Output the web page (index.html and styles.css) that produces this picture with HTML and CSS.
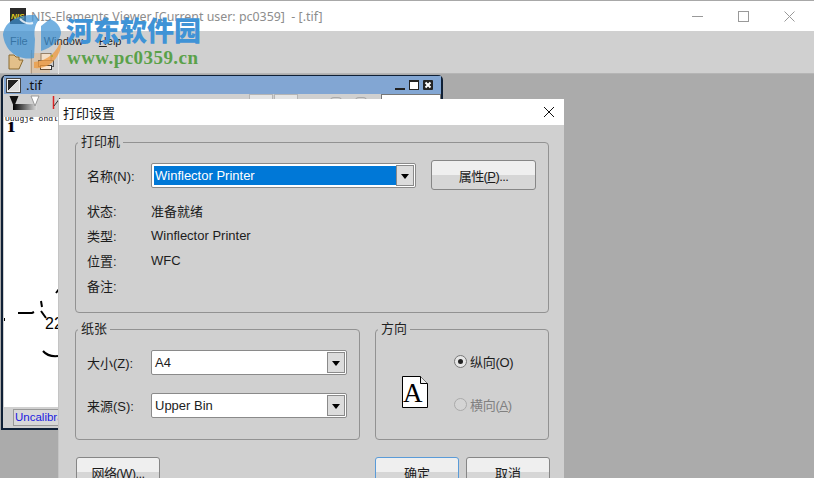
FILE: index.html
```
<!DOCTYPE html>
<html lang="zh">
<head>
<meta charset="utf-8">
<title>NIS-Elements Viewer</title>
<link rel="stylesheet" href="styles.css">
</head>
<body>
<div class="app">
  <header class="titlebar">
    <svg class="app-icon" width="16" height="16" viewBox="0 0 16 16"><rect width="16" height="16" fill="#2a2a2a"/><text x="1" y="11" class="nis">NIS</text></svg>
    <span class="app-title">NIS-Elements Viewer [Current user: pc0359]  - [.tif]</span>
    <div class="win-controls">
      <svg width="11" height="11" viewBox="0 0 11 11"><path d="M0 5.500h11" stroke="#999" fill="none"/></svg>
      <svg width="11" height="11" viewBox="0 0 11 11"><rect x=".5" y=".5" width="10" height="10" stroke="#999" fill="none"/></svg>
      <svg width="11" height="11" viewBox="0 0 11 11"><path d="M.5.5l10 10M10.500.5l-10 10" stroke="#999" fill="none"/></svg>
    </div>
  </header>
  <nav class="menubar"><span>File</span><span>Window</span><span><u>H</u>elp</span></nav>
  <div class="toolbar">
    <svg width="16" height="18" viewBox="0 0 16 18"><path d="M1 2h5l2 2h3v3h4l-4 9H1z" fill="#e3c08a" stroke="#8a6a30"/></svg>
    <div class="tool-print">
      <svg width="20" height="20" viewBox="0 0 20 20"><rect x="5" y="1.500" width="10" height="7" fill="#f4f4f4" stroke="#777"/><rect x="2.500" y="8.500" width="15" height="6" fill="#ccc" stroke="#555"/><rect x="4.500" y="13.500" width="11" height="4" fill="#fff" stroke="#333"/><rect x="15" y="3" width="2" height="2" fill="#2c2"/></svg>
    </div>
  </div>
  <main class="workspace">
    <section class="child">
      <div class="child-title">
        <span class="child-icon"></span>
        <span class="child-name">.tif</span>
        <div class="child-btns">
          <svg width="10" height="10" viewBox="0 0 10 10"><rect x="0" y="8" width="10" height="2" fill="#222"/></svg>
          <svg width="10" height="10" viewBox="0 0 10 10"><rect x=".5" y=".5" width="9" height="9" fill="#fff" stroke="#222"/><rect width="10" height="2" fill="#222"/></svg>
          <svg width="10" height="10" viewBox="0 0 10 10"><rect width="10" height="10" rx="1" fill="#222"/><path d="M2.500 2.500l5 5M7.500 2.500l-5 5" stroke="#fff" stroke-width="2"/></svg>
        </div>
      </div>
      <div class="child-tools">
        <svg width="36" height="20" viewBox="0 0 36 20"><defs><linearGradient id="g"><stop offset="0" stop-color="#000"/><stop offset="1" stop-color="#ddd"/></linearGradient></defs><rect x="5" y="9" width="24" height="6" fill="url(#g)"/><path d="M1.500 1h9l-4.500 11z" fill="#111"/><path d="M23 1h8l-4 10z" fill="#fff" stroke="#999"/></svg>
        <svg class="red-tool" width="10" height="20" viewBox="0 0 10 20"><path d="M1.500 1v13" stroke="#d22" stroke-width="1.500"/><path d="M2 11l6-8" stroke="#333"/></svg>
        <span class="pat first"></span><span class="pat"></span>
        <span class="dot first"></span><span class="dot"></span>
        <span class="mini-field"></span>
      </div>
      <div class="canvas">
        <span class="cap">Uuugje ondl eneie</span>
        <span class="one">1</span>
        <svg class="blobs" width="58" height="80" viewBox="0 0 58 80"><path d="M14 30h14l2-1M37 18l1 6M37 28l5 7M52 10l3-4M0 35v3M39 68q5 6 15 5" stroke="#000" stroke-width="2" fill="none"/></svg>
        <span class="two">22</span>
      </div>
      <div class="child-status"><span>Uncalibrated</span></div>
    </section>

    <section class="dialog">
      <div class="dlg-title">
        <span>打印设置</span>
        <svg width="12" height="12" viewBox="0 0 12 12"><path d="M1 1l10 10M11 1L1 11" stroke="#111" fill="none"/></svg>
      </div>
      <div class="dlg-body">
        <fieldset class="group printer">
          <legend>打印机</legend>
          <div class="name-row">
            <span class="lbl">名称(N):</span>
            <div class="combo selected"><span class="combo-val">Winflector Printer</span><span class="arrow"></span></div>
            <button class="btn prop tight">属性(<u>P</u>)...</button>
          </div>
          <div class="info"><span class="lbl">状态:</span><span>准备就绪</span></div>
          <div class="info"><span class="lbl">类型:</span><span>Winflector Printer</span></div>
          <div class="info"><span class="lbl">位置:</span><span>WFC</span></div>
          <div class="info"><span class="lbl">备注:</span><span></span></div>
        </fieldset>
        <div class="lower">
          <fieldset class="group paper">
            <legend>纸张</legend>
            <div class="paper-row"><span class="lbl">大小(Z):</span><div class="combo"><span class="combo-val">A4</span><span class="arrow"></span></div></div>
            <div class="paper-row"><span class="lbl">来源(S):</span><div class="combo"><span class="combo-val">Upper Bin</span><span class="arrow"></span></div></div>
          </fieldset>
          <fieldset class="group orient">
            <legend>方向</legend>
            <div class="orient-inner">
              <svg class="page" width="26" height="32" viewBox="0 0 26 32"><path d="M.5.5h18l7 7v24H.5z" fill="#fff" stroke="#000"/><path d="M18.500.5v7h7" fill="#eee" stroke="#000"/></svg>
              <span class="page-a">A</span>
              <div class="radios">
                <div class="radio on"><i></i><span>纵向(O)</span></div>
                <div class="radio off"><i></i><span>横向(<u>A</u>)</span></div>
              </div>
            </div>
          </fieldset>
        </div>
        <div class="actions">
          <button class="btn wide tight">网络(<u>W</u>)...</button>
          <span class="grow"></span>
          <button class="btn wide primary">确定</button>
          <button class="btn wide">取消</button>
        </div>
      </div>
    </section>
  </main>
  <div class="wm">
    <svg class="wm-logo" width="70" height="70" viewBox="0 0 70 70">
      <rect x="30" y="48" width="20" height="20" fill="#ef9a3e" opacity=".25"/>
      <path d="M34 57C48 56 58 46 61 34c2 14-9 31-27 29z" fill="#ef9a3e" opacity=".75"/>
      <path d="M3 30C4 18 16 9 35 10l4 5c-5 5-5 13-4 19l-1 19C18 56 5 46 3 30z" fill="#3f93d6" opacity=".72"/>
      <path d="M41 21l9-7c6 2 11 8 11 14 0 6-9 15-20 18z" fill="#3f93d6" opacity=".72"/>
      <path d="M20 14q6 6 13 4" fill="none" stroke="#fff" stroke-width="2" opacity=".8"/>
    </svg>
    <span class="wm-cn">河东软件园</span>
    <span class="wm-url">www.pc0359.cn</span>
  </div>
</div>
</body>
</html>
```
FILE: styles.css
```
* { box-sizing: border-box; }
html, body { margin: 0; padding: 0; height: 100%; overflow: hidden; }
body { font: 13px "Liberation Sans", "Noto Sans CJK SC", sans-serif; color: #1c1c1c; background: #ababab; }
.app { position: relative; width: 814px; height: 478px; overflow: hidden; display: flex; flex-direction: column; border-top: 1px solid #a8a8a8; }
.titlebar { height: 30px; background: #fff; display: flex; align-items: center; padding: 0 0 0 10px; gap: 5px; flex: none; }
.app-icon { flex: none; }
.nis { font: italic bold 8px "Liberation Sans", sans-serif; fill: #e6d020; }
.app-title { font: 12.400px "Noto Sans", sans-serif; color: #8d8d8d; white-space: pre; }
.win-controls { margin-left: auto; display: flex; gap: 35px; padding-right: 19px; }
.menubar { height: 19px; background: #d0d0d0; display: flex; align-items: center; gap: 16px; padding: 0 0 0 10px; font: 11px "Liberation Sans", sans-serif; flex: none; }
.menubar span { color: #222; }
.toolbar { height: 24px; background: #d0d0d0; display: flex; align-items: center; gap: 8px; padding: 0 0 0 8px; flex: none; border-bottom: 1px solid #b5b5b5; }
.tool-print { width: 28px; height: 24px; margin-left: -1px; padding-left: 2px; display: flex; align-items: center; justify-content: center; border-left: 1px solid #999; border-right: 1px solid #e4e4e4; }
.workspace { position: relative; flex: 1; background: #ababab; }

.child { position: absolute; left: 1px; top: 1px; width: 442px; height: 355px; background: #d0d0d0; border: 2px solid #0f2036; border-top-width: 1px; border-top-left-radius: 5px; border-top-right-radius: 5px; display: flex; flex-direction: column; padding: 0 0 0 1px; }
.child-title { height: 18px; background: #82a6d3; display: flex; align-items: center; gap: 3px; padding: 0 2px 0 2px; flex: none; }
.child-icon { width: 15px; height: 15px; border: 2px solid #eee; outline: 1px solid #444; outline-offset: -1px; background: linear-gradient(135deg, #222 50%, #ddd 50%); }
.child-name { font: 13px "Noto Sans", sans-serif; color: #111; margin-left: 2px; }
.child-btns { margin-left: auto; display: flex; gap: 4px; padding-right: 6px; }
.child-tools { height: 23px; display: flex; align-items: flex-start; padding: 1px 0 0 4px; flex: none; overflow: hidden; }
.red-tool { margin-left: 8px; flex: none; }
.pat { width: 24px; height: 5px; margin-left: 1px; background: #e4e4e4; border: 1px solid #b5b5b5; border-bottom: 0; margin-top: -1px; }
.pat.first { margin-left: 187px; }
.dot { width: 12px; height: 4px; border: 1px solid #aaa; border-bottom: 0; border-radius: 6px 6px 0 0; margin: 2px 0 0 13px; }
.dot.first { margin-left: 32px; }
.mini-field { width: 60px; height: 7px; background: #fff; border: 1px solid #777; border-bottom: 0; margin: -1px 0 0 14px; }
.canvas { position: relative; flex: 1; background: #fff; overflow: hidden; }
.cap { position: absolute; left: 1px; top: -3px; font: 8px "Liberation Mono", monospace; color: #000; white-space: nowrap; }
.one { position: absolute; left: 3px; top: 2px; font: bold 15px "Liberation Serif", serif; color: #000; text-shadow: 1px 0 0 #224; }
.two { position: absolute; left: 41px; top: 198px; font: 16px "Liberation Sans", sans-serif; color: #000; }
.blobs { position: absolute; left: 0; top: 166px; }
.child-status { height: 21px; padding: 2px 0 0 9px; flex: none; }
.child-status span { display: block; border: 1px solid #999; background: #d8d8d8; color: #1a1ae0; font-size: 11.500px; line-height: 15px; height: 17px; padding-left: 1px; }

.dialog { position: absolute; left: 59px; top: 25px; width: 505px; height: 400px; background: #d0d0d0; box-shadow: -1px 0 0 #c4c4c4; }
.dlg-title { height: 26px; background: #fff; display: flex; align-items: center; justify-content: space-between; padding: 0 9px 0 4px; font-size: 13px; color: #111; }
.dlg-body { padding: 9px 15px 0 16px; display: flex; flex-direction: column; }
.group { margin: 0; padding: 0 11px; border: 1px solid #929292; border-radius: 4px; min-width: 0; }
.printer { padding-bottom: 14px; }
.group legend { padding: 0 3px; margin-left: -9px; font-size: 13px; line-height: 16px; color: #222; }
.lbl { width: 64px; flex: none; }
.name-row { display: flex; align-items: center; height: 30px; margin-top: 10px; margin-bottom: 8px; }
.combo { width: 265px; height: 25px; background: #fff; border: 1px solid #8a8a8a; border-radius: 2px; padding: 2px; display: flex; align-items: stretch; }
.combo-val { flex: 1; padding-left: 1px; line-height: 19px; color: #1c1c1c; font-size: 13px; }
.selected .combo-val { background: #0078d7; color: #fff; }
.arrow { width: 18px; border: 1px solid #8a8a8a; background: #dcdcdc; position: relative; margin: -1px; }
.arrow::after { content: ""; position: absolute; left: 4px; top: 8px; border: 4px solid transparent; border-top: 5px solid #000; border-bottom: 0; }
.btn { font: inherit; color: #1c1c1c; background: linear-gradient(#efefef 0 50%, #d6d6d6 50% 100%); border: 1px solid #868686; border-radius: 3px; height: 30px; padding: 0; }
.tight { letter-spacing: -.6px; }
.prop { width: 105px; margin-left: 15px; }
.info { display: flex; height: 25px; align-items: center; }
.lower { display: flex; gap: 15px; margin-top: 8px; }
.paper { width: 285px; height: 119px; }
.orient { width: 174px; height: 119px; }
.paper-row { display: flex; align-items: center; height: 25px; margin-bottom: 18px; }
.paper-row:first-of-type { margin-top: 13px; }
.paper-row .combo { width: 196px; }
.orient-inner { position: relative; height: 92px; display: flex; }
.page { margin: 39px 0 0 15px; flex: none; }
.page-a { position: absolute; left: 16px; top: 43px; font: 27px/26px "Liberation Serif", serif; color: #000; }
.radios { margin-left: 27px; padding-top: 15px; display: flex; flex-direction: column; gap: 24px; }
.radio { display: flex; align-items: center; gap: 3px; height: 19px; white-space: nowrap; margin-left: -1px; letter-spacing: -.3px; }
.radio i { width: 13px; height: 13px; border-radius: 50%; border: 1px solid #777; background: #e6e6e6; position: relative; }
.radio.on i::after { content: ""; position: absolute; inset: 3px; border-radius: 50%; background: #222; }
.radio.off { color: #808080; }
.radio.off i { border-color: #aaa; background: #d4d4d4; }
.actions { display: flex; margin: 17px -1px 0 1px; gap: 7px; }
.grow { flex: 1; }
.wide { width: 84px; }
.primary { border: 1px solid #5a9bd8; }

.wm { position: absolute; inset: 0; pointer-events: none; }
.wm-logo { position: absolute; left: 0; top: 4px; }
.wm-cn { position: absolute; left: 66px; top: 11px; font: 900 27px/36px "Noto Sans CJK SC", sans-serif; color: #3f93d6; }
.wm-url { position: absolute; left: 67px; top: 47px; font: bold 19px/20px "Liberation Serif", serif; color: #5aa14a; letter-spacing: .45px; }
```
